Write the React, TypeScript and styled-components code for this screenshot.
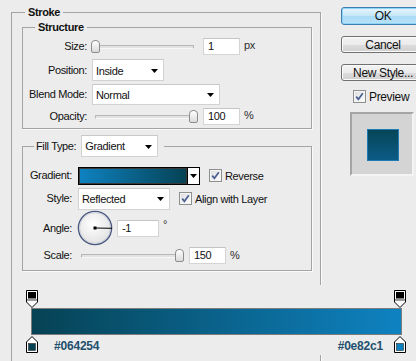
import React from "react";
import styled, { createGlobalStyle } from "styled-components";

const GlobalStyle = createGlobalStyle`
  html, body {
    margin: 0;
    padding: 0;
    background: #ececec;
    overflow: hidden;
  }
  body {
    font-family: "Liberation Sans", Arial, sans-serif;
    font-size: 11px;
    letter-spacing: -0.35px;
    color: #111;
  }
`;

const Page = styled.div`
  display: flex;
  align-items: flex-start;
  width: 425px;
  height: 361px;
  padding-left: 11px;
  box-sizing: border-box;
  overflow: hidden;
`;

const Group = styled.fieldset<{ $width: number; $top: number; $padLeft?: number; $minHeight?: number }>`
  flex: none;
  box-sizing: border-box;
  width: ${(p) => p.$width}px;
  min-inline-size: 0;
  min-height: ${(p) => p.$minHeight ?? 0}px;
  margin: ${(p) => p.$top}px 0 0;
  padding: 0 0 0 ${(p) => p.$padLeft ?? 0}px;
  border: 1px solid #a4a4a4;
  box-shadow: 1px 1px 0 #fafafa;
`;

const Legend = styled.legend<{ $indent: number; $pad: string; $bold?: boolean }>`
  margin-left: ${(p) => p.$indent}px;
  padding: ${(p) => p.$pad};
  font-weight: ${(p) => (p.$bold ? "bold" : "normal")};
  line-height: 13px;
`;

const LegendRow = styled.span`
  display: flex;
  align-items: center;
  gap: 5px;
`;

const FormGrid = styled.div<{ $label: number; $gap: number; $rows: string; $top: number; $bottom: number }>`
  display: grid;
  grid-template-columns: ${(p) => p.$label}px auto;
  grid-template-rows: ${(p) => p.$rows};
  column-gap: ${(p) => p.$gap}px;
  align-items: center;
  padding: ${(p) => p.$top}px 0 ${(p) => p.$bottom}px;
`;

const Label = styled.span`
  justify-self: end;
  white-space: nowrap;
  line-height: 13px;
`;

const Control = styled.div<{ $gap?: number }>`
  display: flex;
  align-items: center;
  gap: ${(p) => p.$gap ?? 0}px;
`;

const SliderBox = styled.div`
  position: relative;
  width: 108px;
  height: 13px;
  margin-right: 3px;
`;

const Track = styled.div`
  width: 97px;
  height: 2px;
  margin: 5px 0 0 3px;
  background: #e2e2e2;
  border: 1px solid #b7b7b7;
  border-bottom-color: #f7f7f7;
`;

const Thumb = styled.div`
  position: absolute;
  top: 0;
  width: 7px;
  height: 11px;
  border: 1px solid #8d8d8d;
  border-radius: 4px 4px 2px 2px;
  background: linear-gradient(#ffffff, #dadada);
`;

const Field = styled.div<{ $w: number }>`
  box-sizing: border-box;
  width: ${(p) => p.$w}px;
  height: 17px;
  padding-left: 4px;
  line-height: 15px;
  background: #fff;
  border: 1px solid #d4d4d4;
  border-top-color: #c4c4c4;
`;

const Unit = styled.span<{ $raise?: boolean }>`
  margin-left: 4px;
  color: #2c2c2c;
  position: relative;
  top: ${(p) => (p.$raise ? -4 : -1)}px;
`;

const Select = styled.div<{ $w: number; $h: number }>`
  box-sizing: border-box;
  display: flex;
  align-items: center;
  justify-content: space-between;
  width: ${(p) => p.$w}px;
  height: ${(p) => p.$h}px;
  padding: 1px 5px 0 3px;
  background: #fff;
  border: 1px solid #d2d2d2;
  border-top-color: #c8c8c8;
`;

const Caret = () => (
  <svg width="7" height="4" viewBox="0 0 7 4">
    <polygon points="0,0 7,0 3.5,4" fill="#000" />
  </svg>
);

const CheckBox = styled.span`
  box-sizing: border-box;
  display: inline-flex;
  align-items: center;
  justify-content: center;
  width: 13px;
  height: 13px;
  border: 1px solid #8e8f8f;
  background: linear-gradient(135deg, #dcdcdc, #ffffff);
  box-shadow: inset 0 0 0 1px #f4f4f4;
`;

const Check = () => (
  <CheckBox>
    <svg width="11" height="11" viewBox="0 0 11 11">
      <path d="M2.2 5.6 L4.4 8.3 L8.8 2.2" fill="none" stroke="#4a5f92" strokeWidth="1.7" />
    </svg>
  </CheckBox>
);

const CheckText = styled.span<{ $size?: number }>`
  margin-left: 3px;
  font-size: ${(p) => p.$size ?? 11}px;
`;

const Swatch = styled.div`
  display: flex;
  margin-right: 9px;
`;

const SwatchBar = styled.div`
  box-sizing: border-box;
  width: 110px;
  height: 18px;
  border: 1px solid #000;
  box-shadow: inset 0 0 0 1px #3a3a3a;
  background: linear-gradient(to right, #0e82c1, #064254);
`;

const SwatchArrow = styled.div`
  box-sizing: border-box;
  display: flex;
  align-items: center;
  justify-content: center;
  width: 12px;
  height: 18px;
  background: #fff;
  border: 1px solid #000;
  border-left: none;
`;

const Dial = () => (
  <svg width="36" height="36" viewBox="0 0 36 36" style={{ marginLeft: -1, marginRight: 4 }}>
    <defs>
      <radialGradient id="dialFill" cx="0.45" cy="0.4" r="0.6">
        <stop offset="0" stopColor="#ffffff" />
        <stop offset="1" stopColor="#e2e2e2" />
      </radialGradient>
    </defs>
    <circle cx="18" cy="18" r="16.6" fill="url(#dialFill)" stroke="#4a5a80" strokeWidth="1.4" />
    <circle cx="18" cy="18" r="15.4" fill="none" stroke="#c8ccd6" strokeWidth="0.8" />
    <line x1="18" y1="18" x2="35" y2="18.3" stroke="#000" strokeWidth="1" />
    <rect x="16.5" y="16.5" width="3" height="3" fill="#000" />
  </svg>
);

const Editor = styled.div`
  box-sizing: border-box;
  width: 404px;
  margin: 14px 0 0 -10px;
  padding: 5px 0 2px 14px;
  background: #ececec;
`;

const StopRow = styled.div`
  display: flex;
  justify-content: space-between;
  align-items: flex-start;
  width: 380px;
  height: 18px;
`;

const Bar = styled.div`
  box-sizing: border-box;
  width: 371px;
  height: 27px;
  margin-left: 5px;
  border: 1px solid #7c7c7c;
  background: linear-gradient(to right, #064254, #0e82c1);
`;

const BottomRow = styled.div`
  display: flex;
  align-items: flex-end;
  width: 380px;
  height: 17px;
  margin-top: 1px;
`;

const HexText = styled.span<{ $gap: number; $side: "left" | "right" }>`
  ${(p) => (p.$side === "left" ? `margin-left: ${p.$gap}px;` : `margin-right: ${p.$gap}px;`)}
  font-size: 12px;
  font-weight: bold;
  letter-spacing: -0.2px;
  line-height: 14px;
  color: #23506e;
  position: relative;
  top: 0;
`;

const Spacer = styled.span`
  flex: 1;
`;

const TopStop = () => (
  <svg width="12" height="18" viewBox="0 0 12 18">
    <path d="M0.5 0.5 H11.5 V12 L6 17.5 L0.5 12 Z" fill="#fff" stroke="#000" />
    <rect x="2" y="2" width="8" height="6.5" fill="#000" />
    <rect x="1" y="9" width="10" height="2" fill="#9a9a9a" />
  </svg>
);

const BottomStop = ({ color }: { color: string }) => (
  <svg width="12" height="17" viewBox="0 0 12 17">
    <path d="M6 0.5 L11.5 6 V16.5 H0.5 V6 Z" fill="#fff" stroke="#000" />
    <rect x="2.5" y="7.5" width="7" height="7" fill={color} stroke="#2a2a2a" strokeWidth="0.6" />
  </svg>
);

const Side = styled.div`
  flex: none;
  display: flex;
  flex-direction: column;
  width: 84px;
  margin-left: 20px;
  padding-top: 7px;
  font-size: 12px;
`;

const Button = styled.div<{ $primary?: boolean; $h: number; $gap: number }>`
  box-sizing: border-box;
  display: flex;
  align-items: center;
  justify-content: center;
  height: ${(p) => p.$h}px;
  margin-bottom: ${(p) => p.$gap}px;
  border: 1px solid ${(p) => (p.$primary ? "#3c7fb1" : "#707070")};
  border-radius: 3px;
  background: ${(p) =>
    p.$primary
      ? "linear-gradient(#e5f5fd, #c4e6f8 50%, #a9dbf6 51%, #b9e2f7)"
      : "linear-gradient(#f3f3f3, #ebebeb 50%, #dddddd 51%, #d0d0d0)"};
  box-shadow: inset 0 0 0 1px ${(p) => (p.$primary ? "#8fd4f6" : "#fbfbfb")};
  white-space: nowrap;
  line-height: 14px;
`;

const PreviewRow = styled.div`
  display: flex;
  align-items: center;
  height: 13px;
  margin: -3px 0 0 12px;
`;

const PreviewPanel = styled.div`
  box-sizing: border-box;
  display: flex;
  align-items: center;
  justify-content: center;
  width: 64px;
  height: 64px;
  margin: 9px 0 0 9px;
  background: #d4d4d4;
  border: 2px solid #a5a5a5;
  border-right-color: #f4f4f4;
  border-bottom-color: #f4f4f4;
`;

const PreviewSquare = styled.div`
  box-sizing: border-box;
  width: 32px;
  height: 32px;
  margin: 2px 0 0 1px;
  border: 1px solid #1d7ab3;
  background: linear-gradient(#064557, #0b5b86);
`;

const Slider = ({ value }: { value: number }) => (
  <SliderBox>
    <Track />
    <Thumb style={{ left: -1 + value * 98 }} />
  </SliderBox>
);

export default function App() {
  return (
    <Page>
      <GlobalStyle />
      <Group $width={310} $top={6} $padLeft={10} $minHeight={400}>
        <Legend $indent={3} $pad="0 3px" $bold>
          Stroke
        </Legend>

        <Group $width={290} $top={2}>
          <Legend $indent={12} $pad="0 3px" $bold>
            Structure
          </Legend>
          <FormGrid $label={64} $gap={5} $rows="24px 24px 24px 20px" $top={0} $bottom={2}>
            <Label>Size:</Label>
            <Control>
              <Slider value={0} />
              <Field $w={37}>1</Field>
              <Unit>px</Unit>
            </Control>

            <Label>Position:</Label>
            <Control>
              <Select $w={72} $h={22}>
                Inside
                <Caret />
              </Select>
            </Control>

            <Label>Blend Mode:</Label>
            <Control>
              <Select $w={128} $h={21}>
                Normal
                <Caret />
              </Select>
            </Control>

            <Label>Opacity:</Label>
            <Control>
              <Slider value={1} />
              <Field $w={37}>100</Field>
              <Unit>%</Unit>
            </Control>
          </FormGrid>
        </Group>

        <Group $width={290} $top={6}>
          <Legend $indent={11} $pad="0 6px 0 2px">
            <LegendRow>
              Fill Type:
              <Select $w={77} $h={22}>
                Gradient
                <Caret />
              </Select>
            </LegendRow>
          </Legend>
          <FormGrid $label={49} $gap={6} $rows="23px 23px 36px 19px" $top={7} $bottom={5}>
            <Label>Gradient:</Label>
            <Control>
              <Swatch>
                <SwatchBar />
                <SwatchArrow>
                  <Caret />
                </SwatchArrow>
              </Swatch>
              <Check />
              <CheckText>Reverse</CheckText>
            </Control>

            <Label>Style:</Label>
            <Control>
              <Select $w={92} $h={22} style={{ marginRight: 9 }}>
                Reflected
                <Caret />
              </Select>
              <Check />
              <CheckText>Align with Layer</CheckText>
            </Control>

            <Label>Angle:</Label>
            <Control>
              <Dial />
              <Field $w={42}>-1</Field>
              <Unit $raise>°</Unit>
            </Control>

            <Label>Scale:</Label>
            <Control>
              <Slider value={1} />
              <Field $w={37}>150</Field>
              <Unit>%</Unit>
            </Control>
          </FormGrid>
        </Group>

        <Editor>
          <StopRow>
            <TopStop />
            <TopStop />
          </StopRow>
          <Bar />
          <BottomRow>
            <BottomStop color="#064254" />
            <HexText $side="left" $gap={16}>
              #064254
            </HexText>
            <Spacer />
            <HexText $side="right" $gap={11}>
              #0e82c1
            </HexText>
            <BottomStop color="#0e82c1" />
          </BottomRow>
        </Editor>
      </Group>

      <Side>
        <Button $primary $h={18} $gap={11}>
          OK
        </Button>
        <Button $h={17} $gap={11}>
          Cancel
        </Button>
        <Button $h={17} $gap={12}>
          New Style...
        </Button>
        <PreviewRow>
          <Check />
          <CheckText $size={12}>Preview</CheckText>
        </PreviewRow>
        <PreviewPanel>
          <PreviewSquare />
        </PreviewPanel>
      </Side>
    </Page>
  );
}
